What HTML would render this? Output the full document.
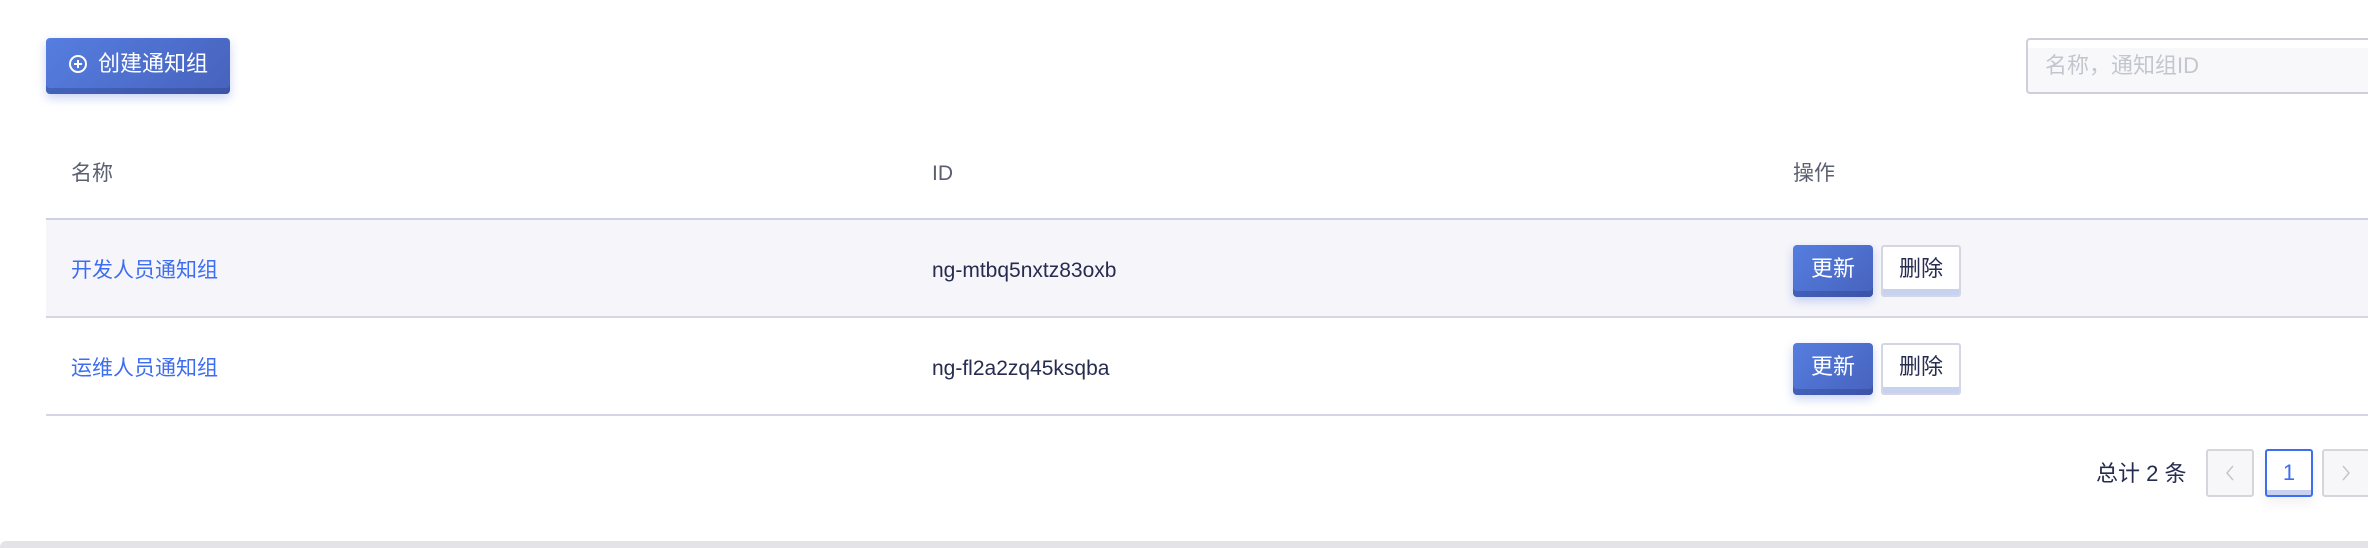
<!DOCTYPE html>
<html><head><meta charset="utf-8"><style>
*{box-sizing:border-box;margin:0;padding:0}
body{width:2368px;height:548px;background:#fff;font-family:"Liberation Sans","Noto Sans CJK SC",sans-serif;position:relative;overflow:hidden}
.abs{position:absolute;line-height:24px}
.btn{background:linear-gradient(135deg,#557ee0,#4762bd);color:#fff;border-radius:4px;box-shadow:inset 0 -6px 0 rgba(40,60,130,.35),0 4px 10px rgba(80,110,220,.3);display:flex;align-items:center;justify-content:center}
.del{background:#fff;border:2px solid #d4d6e4;border-radius:3px;box-shadow:inset 0 -6px 0 #c6d2f0;color:#262c4f;display:flex;align-items:center;justify-content:center;font-size:22px}
.line{position:absolute;left:46px;right:0;height:2px;background:#cdd0e2}
.th{color:#5b6070;font-size:21px}
.link{color:#3d6ef2;font-size:21px}
.id{color:#262c4f;font-size:21px}
.pg{border:2px solid #d4d6dc;border-radius:3px;background:#f7f7f9;display:flex;align-items:center;justify-content:center}
</style></head><body>
<div class="abs btn" style="left:46px;top:38px;width:184px;height:56px;font-size:22px;padding-bottom:4px">
<svg width="20" height="20" viewBox="0 0 20 20" style="margin-right:10px"><circle cx="10" cy="10" r="8" fill="none" stroke="#fff" stroke-width="2"/><path d="M10 6v8M6 10h8" stroke="#fff" stroke-width="2"/></svg>创建通知组</div>
<div class="abs" style="left:2026px;top:38px;width:360px;height:56px;border:2px solid #cdd0dc;border-radius:4px;background:#f8f8fa;box-shadow:inset 0 8px 0 #fff"></div>
<div class="abs" style="left:2045px;top:54px;font-size:22px;color:#c4c6cf">名称，通知组ID</div>

<div class="abs th" style="left:71px;top:162px">名称</div>
<div class="abs th" style="left:932px;top:162px">ID</div>
<div class="abs th" style="left:1793px;top:162px">操作</div>
<div class="line" style="top:218px"></div>
<div class="abs" style="left:46px;right:0;top:220px;height:96px;background:#f6f6fa"></div>
<div class="line" style="top:316px;background:#d4d6e8"></div>
<div class="line" style="top:414px;background:#d4d6e8"></div>

<div class="abs link" style="left:71px;top:259px">开发人员通知组</div>
<div class="abs id" style="left:932px;top:259px">ng-mtbq5nxtz83oxb</div>
<div class="abs btn" style="left:1793px;top:245px;width:80px;height:52px;font-size:22px;padding-bottom:4px">更新</div>
<div class="abs del" style="left:1881px;top:245px;width:80px;height:52px;padding-bottom:4px">删除</div>

<div class="abs link" style="left:71px;top:357px">运维人员通知组</div>
<div class="abs id" style="left:932px;top:357px">ng-fl2a2zq45ksqba</div>
<div class="abs btn" style="left:1793px;top:343px;width:80px;height:52px;font-size:22px;padding-bottom:4px">更新</div>
<div class="abs del" style="left:1881px;top:343px;width:80px;height:52px;padding-bottom:4px">删除</div>

<div class="abs" style="left:2096px;top:462px;font-size:22px;color:#262c4f">总计 2 条</div>
<div class="abs pg" style="left:2206px;top:449px;width:48px;height:48px"><svg width="12" height="20" viewBox="0 0 12 20"><path d="M9 3L3 10l6 7" fill="none" stroke="#c4c6cc" stroke-width="1.5"/></svg></div>
<div class="abs pg" style="left:2265px;top:449px;width:48px;height:48px;background:#fff;border-color:#3d6ef2;color:#3d6ef2;font-size:22px;box-shadow:inset 0 -5px 0 #c6d2f0,0 6px 12px rgba(0,0,0,.06)">1</div>
<div class="abs pg" style="left:2322px;top:449px;width:48px;height:48px"><svg width="12" height="20" viewBox="0 0 12 20"><path d="M3 3l6 7-6 7" fill="none" stroke="#c4c6cc" stroke-width="1.5"/></svg></div>
<div class="abs" style="left:0;right:0;top:541px;height:7px;background:#e4e4e8;border-radius:6px 0 0 0"></div>
</body></html>
